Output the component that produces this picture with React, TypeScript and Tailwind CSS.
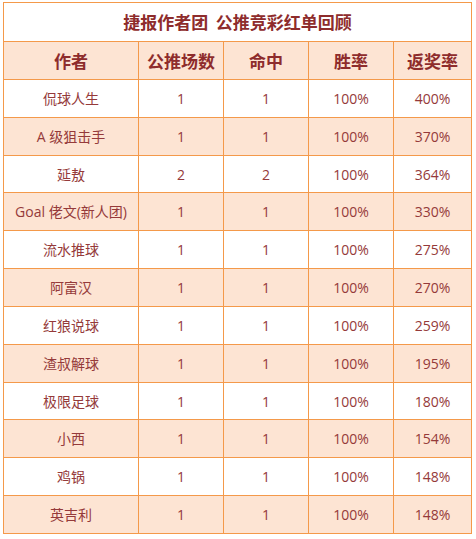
import React from "react";

const rows: [string, string, string, string, string][] = [
  ["侃球人生", "1", "1", "100%", "400%"],
  ["A 级狙击手", "1", "1", "100%", "370%"],
  ["延敖", "2", "2", "100%", "364%"],
  ["Goal 佬文(新人团)", "1", "1", "100%", "330%"],
  ["流水推球", "1", "1", "100%", "275%"],
  ["阿富汉", "1", "1", "100%", "270%"],
  ["红狼说球", "1", "1", "100%", "259%"],
  ["渣叔解球", "1", "1", "100%", "195%"],
  ["极限足球", "1", "1", "100%", "180%"],
  ["小西", "1", "1", "100%", "154%"],
  ["鸡锅", "1", "1", "100%", "148%"],
  ["英吉利", "1", "1", "100%", "148%"],
];

const headers = ["作者", "公推场数", "命中", "胜率", "返奖率"];

export default function App() {
  return (
    <div
      className="w-[476px] h-[539px] bg-white pt-[2px] pl-[3px]"
      style={{ fontFamily: '"Open Sans", "Noto Sans CJK SC", sans-serif' }}
    >
      <table className="border-collapse table-fixed w-[468px]">
        <colgroup>
          <col className="w-[135px]" />
          <col className="w-[85px]" />
          <col className="w-[85px]" />
          <col className="w-[85px]" />
          <col className="w-[78px]" />
        </colgroup>
        <tbody>
          <tr className="h-[39px]">
            <td
              colSpan={5}
              className="border border-[#f4994a] bg-white text-center text-[17px] font-bold text-[#8e2c2c] p-0"
              style={{ fontFamily: '"Noto Sans CJK SC", sans-serif' }}
            >
              捷报作者团&nbsp;&nbsp;公推竞彩红单回顾
            </td>
          </tr>
          <tr className="h-[38px] bg-[#fde4d3]">
            {headers.map((h) => (
              <td
                key={h}
                className="border border-[#f4994a] text-center text-[17px] font-bold text-[#8e2c2c] p-0"
                style={{ fontFamily: '"Noto Sans CJK SC", sans-serif' }}
              >
                {h}
              </td>
            ))}
          </tr>
          {rows.map((r, i) => (
            <tr
              key={i}
              className={`h-[37.83px] ${i % 2 === 1 ? "bg-[#fde4d3]" : "bg-white"}`}
            >
              {r.map((c, j) => (
                <td
                  key={j}
                  className="border border-[#f4994a] text-center text-[14px] text-[#953a3a] p-0"
                >
                  {c}
                </td>
              ))}
            </tr>
          ))}
        </tbody>
      </table>
    </div>
  );
}
